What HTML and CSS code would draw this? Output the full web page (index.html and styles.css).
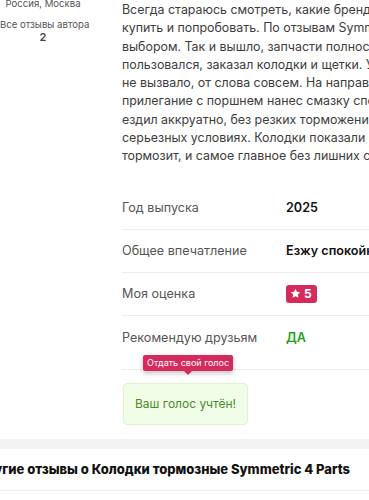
FILE: index.html
```html
<!DOCTYPE html>
<html lang="ru">
<head>
<meta charset="utf-8">
<link rel="stylesheet" href="styles.css">
</head>
<body>
<div class="page">
  <div class="review">
    <aside class="author">
      <div class="city">Россия, Москва</div>
      <div class="all">Все отзывы автора</div>
      <div class="count">2</div>
    </aside>
    <main class="body">
      <div class="text">
        <span class="ln">Всегда стараюсь смотреть, какие бренды есть на рынке и что стоит</span>
        <span class="ln">купить и попробовать. По отзывам Symmetric показался мне хорошим</span>
        <span class="ln">выбором. Так и вышло, запчасти полностью оправдали ожидания. Сам</span>
        <span class="ln">пользовался, заказал колодки и щетки. Установка никаких вопросов</span>
        <span class="ln">не вызвало, от слова совсем. На направляющие и места, где идет</span>
        <span class="ln">прилегание с поршнем нанес смазку специальную. Первые 200 км</span>
        <span class="ln">ездил аккруатно, без резких торможений, потом уже проверил в более</span>
        <span class="ln">серьезных условиях. Колодки показали себя отлично, машина хорошо</span>
        <span class="ln">тормозит, и самое главное без лишних скрипов и посторонних звуков.</span>
      </div>
      <div class="specs">
        <div class="row"><span class="lbl">Год выпуска</span><span class="val">2025</span></div>
        <div class="row"><span class="lbl">Общее впечатление</span><span class="val">Езжу спокойно, колодки отличные</span></div>
        <div class="row"><span class="lbl">Моя оценка</span><span class="val"><span class="badge"><svg class="star" viewBox="0 0 24 24" width="11" height="11"><path d="M12 1.8l3.1 6.6 7.2.9-5.3 5 1.4 7.1L12 17.9l-6.4 3.5 1.4-7.1-5.3-5 7.2-.9z" fill="#fff"/></svg>5</span></span></div>
        <div class="row last"><span class="lbl">Рекомендую друзьям</span><span class="val yes">ДА</span>
          <span class="tip">Отдать свой голос</span>
        </div>
      </div>
      <div class="voted">Ваш голос учтён!</div>
    </main>
  </div>
  <div class="band"></div>
  <section class="others">
    <h2 class="others-title">Другие отзывы о Колодки тормозные Symmetric 4 Parts</h2>
  </section>
</div>
</body>
</html>
```

FILE: styles.css
```css
html, body {
  margin: 0;
  padding: 0;
  background: #fff;
  overflow: hidden;
}
body {
  font-family: Inter, "Noto Sans", "DejaVu Sans", sans-serif;
  color: #333;
  width: 369px;
  height: 500px;
}
.page {
  width: 369px;
  overflow: hidden;
}
.review {
  display: flex;
}
.author {
  width: 86px;
  flex: none;
  text-align: center;
  font-size: 9.6px;
  color: #555;
  margin-top: -3px;
  white-space: nowrap;
}
.city {
  line-height: 13px;
}
.all {
  margin-top: 9px;
  line-height: 12px;
}
.count {
  font-size: 11px;
  font-weight: 600;
  line-height: 12px;
  color: #444;
}
.body {
  margin-left: 36px;
  flex: none;
  width: 420px;
}
.text {
  font-size: 12.4px;
  line-height: 18.3px;
  color: #3c3c3c;
  padding-top: 1px;
}
.ln {
  display: block;
  white-space: nowrap;
}
.specs {
  margin-top: 21px;
}
.row {
  display: flex;
  align-items: center;
  height: 42px;
  border-bottom: 1px solid #eeeef0;
  font-size: 12.6px;
  position: relative;
}
.row.last {
  height: 54px;
  align-items: flex-start;
  padding-top: 14px;
  box-sizing: border-box;
}
.lbl {
  width: 164px;
  flex: none;
  color: #555;
}
.val {
  font-weight: 600;
  color: #111;
  white-space: nowrap;
}
.val.yes {
  color: #1fa31f;
}
.badge {
  display: inline-flex;
  align-items: center;
  gap: 3px;
  background: #d42b5c;
  color: #fff;
  border-radius: 3px;
  height: 18px;
  padding: 0 5px 0 4px;
  font-size: 12px;
  font-weight: 700;
  vertical-align: middle;
}
.tip {
  position: absolute;
  left: 21px;
  top: 39px;
  background: #d42b5c;
  color: #fff;
  font-size: 9px;
  line-height: 16px;
  padding: 0 4px;
  border-radius: 2px;
  box-shadow: 0 2px 5px rgba(0,0,0,0.25);
  white-space: nowrap;
}
.tip::after {
  content: "";
  position: absolute;
  left: 50%;
  bottom: -4px;
  margin-left: -4px;
  border-left: 4px solid transparent;
  border-right: 4px solid transparent;
  border-top: 4px solid #d42b5c;
}
.voted {
  margin-top: 13px;
  width: 125px;
  height: 42px;
  box-sizing: border-box;
  display: flex;
  align-items: center;
  justify-content: center;
  background: #f0fde7;
  border: 1px solid #dcf3cf;
  border-radius: 4px;
  color: #4b8a1e;
  font-size: 12px;
  white-space: nowrap;
  margin-left: 1px;
}
.band {
  margin-top: 14px;
  height: 10px;
  background: #f3f3f5;
}
.others {
  display: flex;
  justify-content: flex-end;
  height: 41px;
  align-items: center;
  border-bottom: 1px solid #eeeef0;
  padding-right: 19px;
  overflow: hidden;
}
.others-title {
  margin: 0;
  font-size: 13px;
  font-weight: 800;
  color: #111;
  white-space: nowrap;
  flex: none;
}
```
